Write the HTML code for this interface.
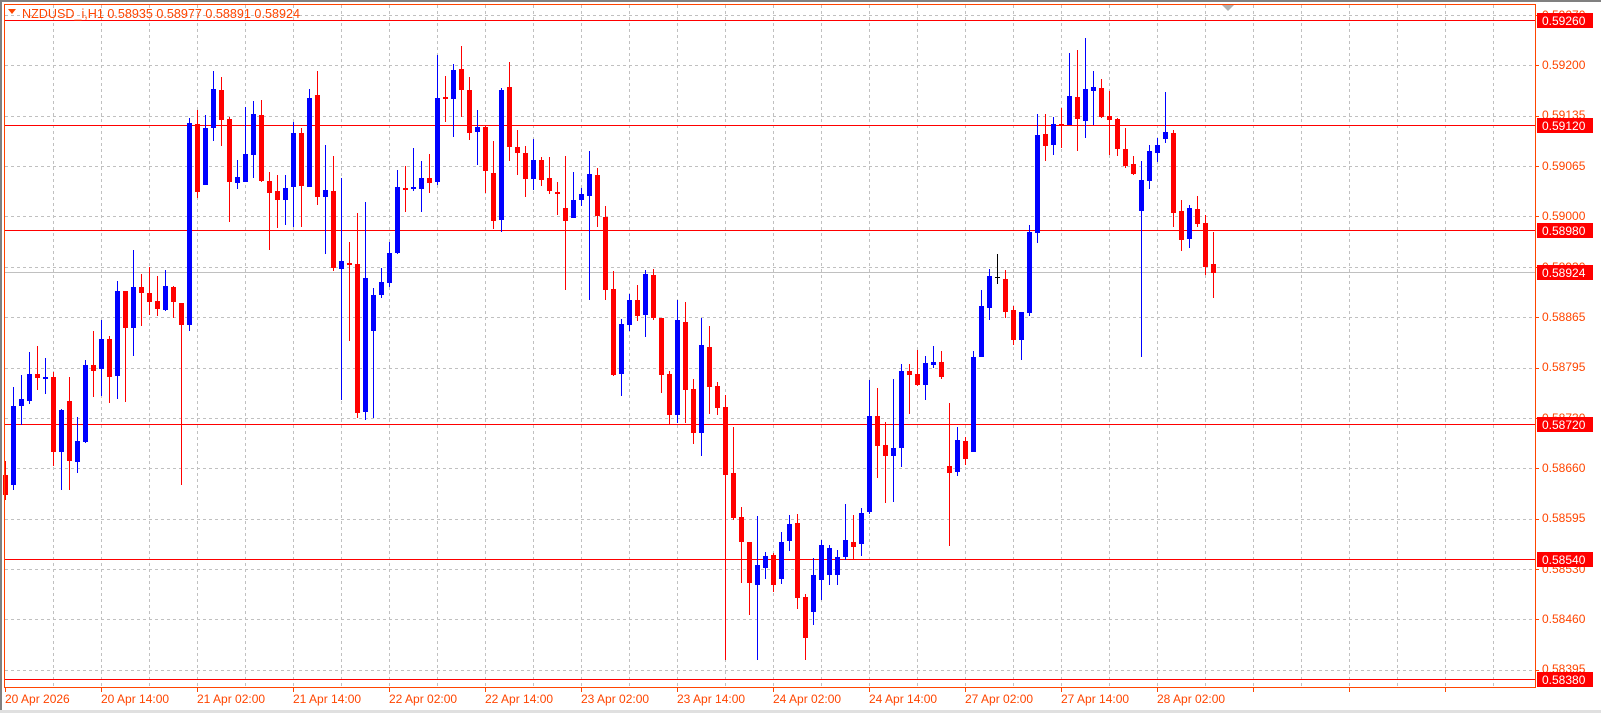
<!DOCTYPE html>
<html><head><meta charset="utf-8"><style>
html,body{margin:0;padding:0;background:#fff;}
body{width:1601px;height:713px;overflow:hidden;position:relative;font-family:"Liberation Sans",sans-serif;}
svg{position:absolute;left:0;top:0;}
</style></head><body>
<svg id="c" width="1601" height="713" xmlns="http://www.w3.org/2000/svg" font-family="Liberation Sans, sans-serif">
<rect x="0" y="0" width="1601" height="713" fill="#fff"/>
<rect x="0" y="0" width="1601" height="2" fill="#808080"/>
<rect x="0" y="0" width="2" height="713" fill="#808080"/>
<rect x="0" y="710" width="1601" height="3" fill="#e0e0e0"/>
<g id="grid" stroke="#c0c0c0" stroke-width="1" stroke-dasharray="3,3"></g>
<line x1="4" y1="272.5" x2="1535" y2="272.5" stroke="#c0c0c0"/>
<g stroke="#ff0000" stroke-width="1">
<line x1="4" y1="20.5" x2="1535" y2="20.5"/>
<line x1="4" y1="125.5" x2="1535" y2="125.5"/>
<line x1="4" y1="230.5" x2="1535" y2="230.5"/>
<line x1="4" y1="424.5" x2="1535" y2="424.5"/>
<line x1="4" y1="559.5" x2="1535" y2="559.5"/>
<line x1="4" y1="679.5" x2="1535" y2="679.5"/>
</g>
<g id="candles"></g>
<rect x="4.5" y="4.5" width="1531" height="683" fill="none" stroke="#ff4500"/>
<polygon points="1222,5 1234,5 1228,11" fill="#b0b0b0"/>
<polygon points="8,9 16,9 12,14" fill="#ff4500"/>
<text x="22" y="18" font-size="12.6" fill="#ff4500">NZDUSD_i,H1  0.58935 0.58977 0.58891 0.58924</text>
<g font-size="12" fill="#ff4500" id="ylab">
<text x="1542" y="19">0.59270</text>
<text x="1542" y="69">0.59200</text>
<text x="1542" y="119">0.59135</text>
<text x="1542" y="170">0.59065</text>
<text x="1542" y="220">0.59000</text>
<text x="1542" y="271">0.58930</text>
<text x="1542" y="321">0.58865</text>
<text x="1542" y="371">0.58795</text>
<text x="1542" y="422">0.58730</text>
<text x="1542" y="472">0.58660</text>
<text x="1542" y="522">0.58595</text>
<text x="1542" y="573">0.58530</text>
<text x="1542" y="623">0.58460</text>
<text x="1542" y="673">0.58395</text>
</g>
<g id="yt" stroke="#ff4500"></g>
<g font-size="12" fill="#fff">
<rect x="1537" y="13" width="56" height="15" fill="#ff0000"/><text x="1542" y="25">0.59260</text>
<rect x="1537" y="118" width="56" height="15" fill="#ff0000"/><text x="1542" y="130">0.59120</text>
<rect x="1537" y="223" width="56" height="15" fill="#ff0000"/><text x="1542" y="235">0.58980</text>
<rect x="1537" y="265" width="56" height="15" fill="#ff0000"/><text x="1542" y="277">0.58924</text>
<rect x="1537" y="417" width="56" height="15" fill="#ff0000"/><text x="1542" y="429">0.58720</text>
<rect x="1537" y="552" width="56" height="15" fill="#ff0000"/><text x="1542" y="564">0.58540</text>
<rect x="1537" y="672" width="56" height="15" fill="#ff0000"/><text x="1542" y="684">0.58380</text>
</g>
<g font-size="12" fill="#ff4500">
<text x="5" y="703">20 Apr 2026</text>
<text x="101" y="703">20 Apr 14:00</text>
<text x="197" y="703">21 Apr 02:00</text>
<text x="293" y="703">21 Apr 14:00</text>
<text x="389" y="703">22 Apr 02:00</text>
<text x="485" y="703">22 Apr 14:00</text>
<text x="581" y="703">23 Apr 02:00</text>
<text x="677" y="703">23 Apr 14:00</text>
<text x="773" y="703">24 Apr 02:00</text>
<text x="869" y="703">24 Apr 14:00</text>
<text x="965" y="703">27 Apr 02:00</text>
<text x="1061" y="703">27 Apr 14:00</text>
<text x="1157" y="703">28 Apr 02:00</text>
</g>
<g id="xt" stroke="#ff4500"></g>
</svg>
<script>
var NS="http://www.w3.org/2000/svg";
function el(p,t,a){var e=document.createElementNS(NS,t);for(var k in a)e.setAttribute(k,a[k]);p.appendChild(e);return e;}
var g=document.getElementById('grid');
for(var i=0;i<14;i++){var y=Math.round(15+50.37*i)+0.5;el(g,'line',{x1:5,y1:y,x2:1535,y2:y});
el(document.getElementById('yt'),'line',{x1:1535,y1:y,x2:1539,y2:y});}
for(var x=53;x<1535;x+=48){el(g,'line',{x1:x+0.5,y1:5,x2:x+0.5,y2:687});}
for(var x=5;x<1535;x+=96){el(document.getElementById('xt'),'line',{x1:x+0.5,y1:687,x2:x+0.5,y2:692});}
var D=[
"r 475 495 461 500","b 406 485 387 490","b 399 406 375 425","b 374 401 352 404","r 374 378 346 390","b 377 378 358 394","r 377 452 372 466","b 410 452 409 490","r 401 461 377 490","b 441 462 417 473",
"b 365 442 360 443","r 365 371 331 397","b 339 369 320 396","r 339 377 336 403","b 291 376 281 399","r 291 328 291 402","b 287 328 250 356","r 287 293 274 326","r 293 302 267 315","r 301 309 276 316",
"b 286 310 270 311","r 287 302 286 318","r 303 325 303 485","b 123 325 118 331","r 124 192 110 198","b 128 185 115 185","b 89 128 71 141","r 90 120 77 146","r 119 182 117 222","b 177 183 160 189",
"b 154 182 107 182","b 114 155 101 178","r 115 181 100 182","r 181 193 172 250","r 191 200 175 228","b 188 200 175 225","b 133 187 122 227","r 133 186 128 227","b 98 187 89 187","r 95 197 71 205",
"b 190 197 145 254","r 191 268 156 271","b 261 269 178 400","r 263 265 242 341","r 264 413 213 418","b 278 412 202 420","b 295 331 288 418","b 282 295 268 298","b 253 283 242 287","b 187 253 170 254",
"r 188 190 166 212","b 187 188 148 191","b 178 189 161 212","r 178 183 154 193","b 98 182 55 185","r 97 99 76 122","b 70 99 64 137","r 69 90 46 117","r 90 133 77 140","b 127 132 110 165",
"r 127 171 125 193","r 173 221 141 229","b 90 220 88 232","r 87 147 62 161","r 147 153 130 175","r 153 179 146 197","b 160 179 139 190","r 160 180 157 186","r 178 191 157 194","r 192 194 182 215",
"r 208 221 156 290","b 200 218 172 218","b 194 200 188 206","b 174 196 151 300","r 175 216 168 227","r 217 290 206 300","r 289 375 271 376","b 324 374 319 396","b 300 325 294 331","r 300 316 285 321",
"b 274 315 270 337","r 275 318 269 320","r 318 375 318 393","r 374 415 371 425","b 320 415 300 423","r 322 390 302 423","r 389 433 379 444","b 345 433 318 456","r 347 387 326 414","r 386 408 382 415",
"r 407 475 395 660","r 473 518 427 520","r 517 542 507 583","r 542 583 542 615","b 565 585 516 660","b 556 568 552 579","r 555 585 553 592","b 542 579 532 584","b 524 541 515 551","r 523 598 514 609",
"r 597 638 594 660","b 575 612 558 625","b 545 580 540 600","b 548 575 545 585","b 557 575 550 585","b 540 557 504 560","r 542 547 515 560","b 513 544 508 556","b 416 512 380 514","r 416 446 388 478",
"r 445 456 422 503","b 448 456 379 502","b 371 448 364 467","r 371 375 364 414","r 374 385 350 386","b 363 385 356 400","b 362 365 346 368","r 362 377 351 379","r 466 473 403 546","b 440 472 427 476",
"r 441 459 437 465","b 357 452 351 452","b 306 357 290 357","b 276 308 269 320","k 277 277 254 284","r 279 312 270 318","r 310 340 306 345","b 312 340 312 360","b 232 313 225 316","b 135 233 114 243",
"r 134 146 114 161","b 124 145 117 155","r 124 125 108 148","b 96 125 53 125","r 97 119 50 151","b 89 121 38 138","b 87 91 71 125","r 88 117 79 118","r 116 120 91 155","r 119 149 118 156",
"r 149 166 128 168","r 164 174 156 175","b 180 211 161 357","b 151 181 145 189","b 145 153 138 162","b 132 139 92 143","r 133 213 130 227","r 211 240 200 251","b 208 239 205 248","r 209 224 196 227",
"r 223 267 215 275","r 264 273 232 298"];
var cg=document.getElementById('candles');
var col={r:"#ff0000",b:"#0000ff",k:"#000000"};
D.forEach(function(s,k){var p=s.split(' ');var c=col[p[0]];var bt=+p[1],bb=+p[2],wt=+p[3],wb=+p[4];var x=5+8*k;
el(cg,'rect',{x:x,y:wt,width:1,height:Math.max(1,wb-wt),fill:c});
if(p[0]=='k'){el(cg,'rect',{x:x-2,y:bt,width:5,height:1,fill:c});}
else el(cg,'rect',{x:x-2,y:bt,width:5,height:Math.max(2,bb-bt),fill:c});});
</script>
</body></html>
